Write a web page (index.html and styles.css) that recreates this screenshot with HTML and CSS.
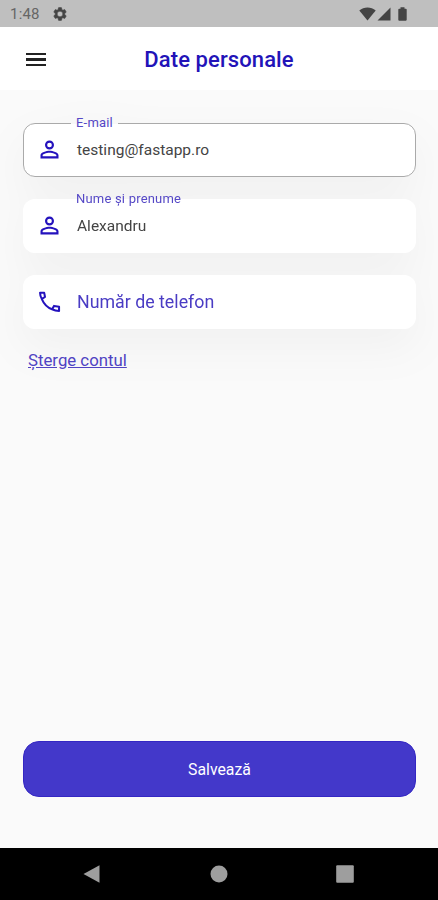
FILE: index.html
```
<!DOCTYPE html>
<html lang="ro">
<head>
    <meta charset="UTF-8">
    <meta name="viewport" content="width=device-width, initial-scale=1.0">
    <title>Date personale</title>
    <link rel="stylesheet" href="styles.css">
</head>
<body>
    <div class="screen">
        <!-- Status bar -->
        <div class="status-bar">
            <span class="clock">1:48</span>
            <svg class="gear" viewBox="0 0 24 24"><path fill-rule="evenodd" d="M19.14 12.94c.04-.3.06-.61.06-.94 0-.32-.02-.64-.07-.94l2.03-1.58c.18-.14.23-.41.12-.61l-1.92-3.32c-.12-.22-.37-.29-.59-.22l-2.39.96c-.5-.38-1.03-.7-1.62-.94l-.36-2.54c-.04-.24-.24-.41-.48-.41h-3.84c-.24 0-.43.17-.47.41l-.36 2.54c-.59.24-1.13.57-1.62.94l-2.39-.96c-.22-.08-.47 0-.59.22L2.74 8.87c-.12.21-.08.47.12.61l2.03 1.58c-.05.3-.09.63-.09.94s.02.64.07.94l-2.03 1.58c-.18.14-.23.41-.12.61l1.92 3.32c.12.22.37.29.59.22l2.39-.96c.5.38 1.03.7 1.62.94l.36 2.54c.05.24.24.41.48.41h3.84c.24 0 .44-.17.47-.41l.36-2.54c.59-.24 1.13-.56 1.62-.94l2.39.96c.22.08.47 0 .59-.22l1.92-3.32c.12-.22.07-.47-.12-.61l-2.01-1.58zM12 16.2A4.2 4.2 0 1 1 12 7.8a4.2 4.2 0 0 1 0 8.4z"/></svg>
            <div class="status-icons">
                <svg width="17" height="14" viewBox="0 0 17 14"><path d="M8.5 13.5L.3 3.4C2.6 1.5 5.4.5 8.5.5s5.9 1 8.2 2.9z"/></svg>
                <svg width="14" height="14" viewBox="0 0 14 14"><path d="M.5 13.5L13.5.5v13z"/></svg>
                <svg class="battery" width="9" height="14" viewBox="0 0 9 14"><path d="M2.5.3h4v1.400h1.300c.5 0 .9.4.9.9v10.200c0 .5-.4.900-.9.900H1.200c-.5 0-.9-.4-.9-.9V2.600c0-.5.4-.9.9-.9h1.300z"/></svg>
            </div>
        </div>

        <!-- Header -->
        <div class="header">
            <button class="menu-button" aria-label="Meniu">
                <span></span>
                <span></span>
                <span></span>
            </button>
            <h1>Date personale</h1>
        </div>

        <!-- Form -->
        <div class="content">
            <div class="fields">
                <div class="field outlined">
                    <svg class="field-icon" viewBox="0 0 24 24"><path d="M12 5.900a2.100 2.100 0 1 1 0 4.200 2.100 2.100 0 0 1 0-4.200m0 9c2.970 0 6.100 1.460 6.100 2.100v1.100H5.900V17c0-.64 3.130-2.100 6.100-2.100M12 4C9.790 4 8 5.790 8 8s1.790 4 4 4 4-1.790 4-4-1.790-4-4-4zm0 9c-2.670 0-8 1.340-8 4v3h16v-3c0-2.660-5.330-4-8-4z"/></svg>
                    <span class="label">E-mail</span>
                    <span class="value">testing@fastapp.ro</span>
                </div>
                <div class="field">
                    <svg class="field-icon" viewBox="0 0 24 24"><path d="M12 5.900a2.100 2.100 0 1 1 0 4.200 2.100 2.100 0 0 1 0-4.200m0 9c2.970 0 6.100 1.460 6.100 2.100v1.100H5.900V17c0-.64 3.130-2.100 6.100-2.100M12 4C9.790 4 8 5.790 8 8s1.790 4 4 4 4-1.790 4-4-1.790-4-4-4zm0 9c-2.670 0-8 1.340-8 4v3h16v-3c0-2.660-5.330-4-8-4z"/></svg>
                    <span class="label">Nume și prenume</span>
                    <span class="value">Alexandru</span>
                </div>
                <div class="field">
                    <svg class="field-icon phone" viewBox="0 0 24 24"><path d="M3.600 4.300h3.700l.7 3.600-2.800 1.900C4.200 8.100 3.600 6.300 3.600 4.300zM5.200 9.800c1.500 3.600 4.700 7.400 9.100 9.100M14.300 18.900l1.700-3 4.500.8v3.700c-2.200 0-4.300-.5-6.200-1.500z"/></svg>
                    <span class="placeholder">Număr de telefon</span>
                </div>
            </div>
            <a class="delete-link" href="#">Șterge contul</a>
            <button class="save-button">Salvează</button>
        </div>

        <!-- Android navigation -->
        <div class="nav-bar">
            <svg viewBox="0 0 20 20"><path d="M1.500 10L17.500 1.200v17.600z"/></svg>
            <svg viewBox="0 0 20 20"><circle cx="10" cy="10" r="8.500"/></svg>
            <svg viewBox="0 0 20 20"><rect x="1.200" y="1.200" width="17.600" height="17.600" rx="1"/></svg>
        </div>
    </div>
</body>
</html>
```
FILE: styles.css
```
* {
    box-sizing: border-box;
}

body {
    font-family: Roboto, sans-serif;
    margin: 0;
    background: #fafafa;
    color: #444;
}

.screen {
    display: flex;
    flex-direction: column;
    height: 900px;
}

/* Status Bar */
.status-bar {
    display: flex;
    align-items: center;
    height: 27px;
    padding: 1px 31px 0 10px;
    background: #bfbfbf;
    color: #666;
}

.clock {
    font-size: 15px;
    letter-spacing: 0.2px;
}

.gear {
    width: 16px;
    height: 16px;
    margin-left: 12px;
    fill: #444;
    stroke: #444;
    stroke-width: 0.8;
}

.status-icons {
    display: flex;
    gap: 1px;
    margin-left: auto;
    fill: #444;
}

.battery {
    margin-left: 6px;
}

/* Header */
.header {
    display: grid;
    grid-template-columns: 40px 1fr 40px;
    align-items: center;
    height: 63px;
    padding: 2px 16px 0;
    background: #fff;
}

.header h1 {
    margin: 0;
    font-size: 22px;
    font-weight: 500;
    letter-spacing: 0.1px;
    text-align: center;
    color: #2213b8;
}

.menu-button {
    display: flex;
    flex-direction: column;
    gap: 3px;
    width: 40px;
    padding: 0 10px;
    border: none;
    background: none;
}

.menu-button span {
    height: 2.4px;
    background: #222;
}

/* Form */
.content {
    display: flex;
    flex-direction: column;
    flex: 1;
    align-items: flex-start;
    padding: 33px 22px 51px 23px;
}

.fields {
    display: flex;
    flex-direction: column;
    gap: 22px;
    width: 100%;
    filter: drop-shadow(0 18px 22px rgba(0, 0, 0, 0.04));
}

.field {
    position: relative;
    display: flex;
    align-items: center;
    height: 54px;
    padding: 0 0 2px 13px;
    border-radius: 12px;
    background: #fff;
}

.outlined {
    padding-left: 12px;
    border: 1px solid #aaa;
}

.field-icon {
    width: 27px;
    height: 27px;
    margin-right: 14px;
    fill: #2412bd;
}

.phone {
    fill: none;
    stroke: #2412bd;
    stroke-width: 1.8;
    stroke-linejoin: round;
}

/* Floating label over the top edge */
.label {
    position: absolute;
    top: -8px;
    left: 48px;
    padding: 0 5px;
    font-size: 13px;
    letter-spacing: 0.2px;
    line-height: 16px;
    color: #5548c6;
}

.outlined .label {
    top: -9px;
    left: 47px;
    background: linear-gradient(#f8f8f8 9px, #fff 9px);
}

.value {
    padding-top: 2px;
    font-size: 15.5px;
}

.placeholder {
    font-size: 17.8px;
    color: #4a3cc4;
}

.delete-link {
    margin: 21px 0 0 5px;
    font-size: 16.8px;
    line-height: 20px;
    color: #5144c5;
}

.save-button {
    width: 100%;
    height: 56px;
    margin-top: auto;
    border: 1px solid #3427c3;
    border-radius: 16px;
    background: #4338ca;
    color: #fff;
    font-family: inherit;
    font-size: 15.8px;
}

/* Navigation Bar */
.nav-bar {
    display: flex;
    align-items: center;
    justify-content: space-between;
    height: 52px;
    padding: 0 83px 0 82px;
    background: #000;
    fill: #9e9e9e;
}

.nav-bar svg {
    width: 20px;
    height: 20px;
}
```
